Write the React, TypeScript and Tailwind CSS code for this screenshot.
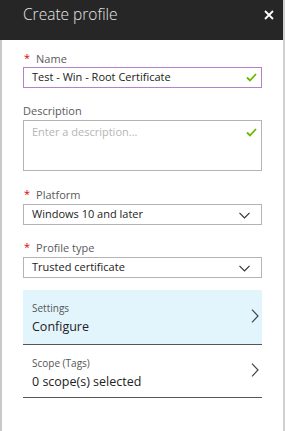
import React from "react";

const Check = () => (
  <svg width="11" height="9" viewBox="0 0 11 9" className="absolute right-[4px]" fill="none">
    <path d="M1 4.5 L4 7.5 L10 1" stroke="#6bb700" strokeWidth="1.8" />
  </svg>
);

const ChevDown = () => (
  <svg width="11" height="7" viewBox="0 0 11 7" fill="none" className="absolute right-[11px] top-[7px]">
    <path d="M0.5 0.8 L5.5 5.8 L10.5 0.8" stroke="#333" strokeWidth="1.2" />
  </svg>
);

const ChevRight = () => (
  <svg width="8" height="14" viewBox="0 0 8 14" fill="none" className="absolute right-[3px]">
    <path d="M1 0.7 L7 7 L1 13.3" stroke="#444" strokeWidth="1.2" />
  </svg>
);

const Label = ({ text, req }: { text: string; req?: boolean }) => (
  <div className="flex items-center h-[17px] text-[11px] leading-[17px] text-[#5a5a5a]">
    {req && <span className="text-[#e00000] text-[11px] ml-[1px] mr-[6px] relative top-[-1px]">*</span>}
    <span>{text}</span>
  </div>
);

export default function App() {
  return (
    <div className="w-[285px] h-[431px] flex flex-col bg-white border-r-2 border-[#d0d0d0] font-['Open_Sans',sans-serif]">
      <div className="h-[40px] shrink-0 bg-[#262626] flex items-center justify-between pl-[23px] pr-[9px]">
        <span className="text-[15.5px] font-light text-[#e6e6e6] leading-none relative top-[-5px]">Create profile</span>
        <svg width="10" height="10" viewBox="0 0 10 10" className="relative top-[-5px]">
          <path d="M1 1 L9 9 M9 1 L1 9" stroke="#fff" strokeWidth="1.8" />
        </svg>
      </div>
      <div className="flex-1 flex flex-col border-l-2 border-[#c8c8c8] px-[21px] pt-[10px]">
        <Label text="Name" req />
        <div className="relative h-[21px] border border-[#b681cc] flex items-center pl-[8px] text-[11px] text-[#222]">
          Test - Win - Root Certificate
          <Check />
        </div>
        <div className="mt-[14px]"><Label text="Description" /></div>
        <div className="relative mt-[1px] h-[51px] border border-[#b4b4b4] pl-[8px] pt-[3px] text-[11px] text-[#b5b5b5]">
          Enter a description...
          <div className="absolute right-0 top-[7px] w-[15px] h-[9px]"><Check /></div>
        </div>
        <div className="mt-[15px]"><Label text="Platform" req /></div>
        <div className="relative mt-[1px] h-[21px] border border-[#b4b4b4] flex items-center pl-[8px] text-[11px] text-[#222]">
          Windows 10 and later
          <ChevDown />
        </div>
        <div className="mt-[14px]"><Label text="Profile type" req /></div>
        <div className="relative mt-[1px] h-[21px] border border-[#b4b4b4] flex items-center pl-[8px] text-[11px] text-[#222]">
          Trusted certificate
          <ChevDown />
        </div>
        <div className="relative mt-[12px] h-[55px] bg-[#e3f5fc] border-b border-[#555] pl-[9px] pt-[10px] flex flex-col">
          <span className="text-[10px] leading-[17px] text-[#555]">Settings</span>
          <span className="text-[12.5px] leading-[19px] text-[#222]">Configure</span>
          <div className="absolute right-0 top-[19px] w-[12px] h-[14px]"><ChevRight /></div>
        </div>
        <div className="relative h-[53px] border-b border-[#555] pl-[9px] pt-[10px] flex flex-col">
          <span className="text-[10px] leading-[17px] text-[#555]">Scope (Tags)</span>
          <span className="text-[12.5px] leading-[19px] text-[#222]">0 scope(s) selected</span>
          <div className="absolute right-0 top-[18px] w-[12px] h-[14px]"><ChevRight /></div>
        </div>
      </div>
    </div>
  );
}
